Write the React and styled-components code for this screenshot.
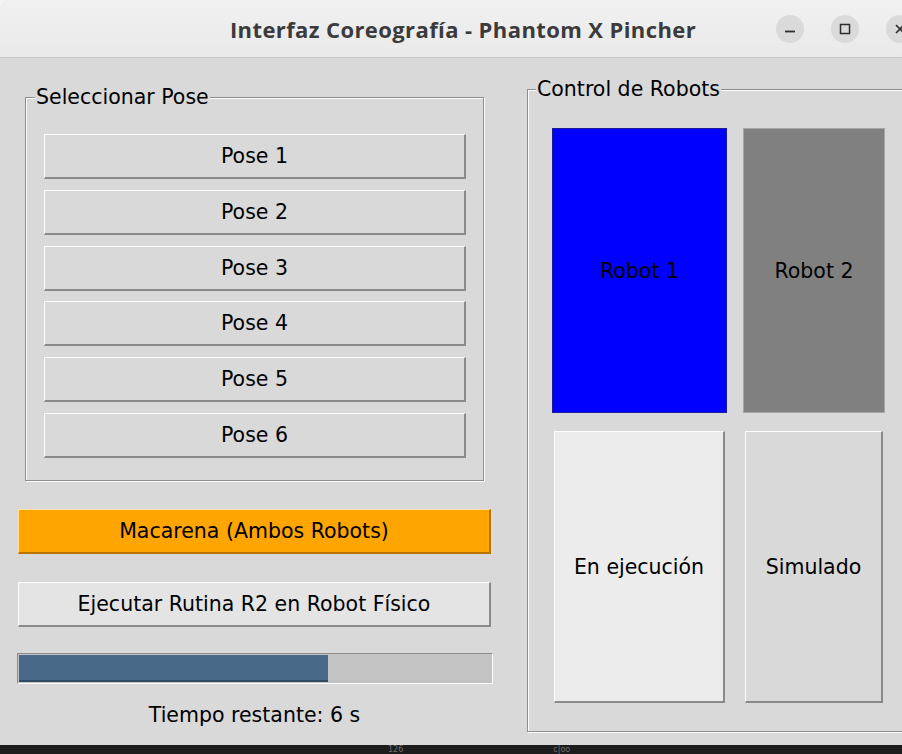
import React from 'react';
import styled, { createGlobalStyle } from 'styled-components';

const GlobalStyle = createGlobalStyle`
  html, body {
    margin: 0;
    padding: 0;
    overflow: hidden;
    background: #f4f4f4;
  }
`;

// Ventana principal
const Screen = styled.div`
  width: 902px;
  height: 754px;
  overflow: hidden;
  display: flex;
  flex-direction: column;
  font-family: "DejaVu Sans", "Liberation Sans", sans-serif;
`;

const Window = styled.div`
  width: 926px;
  height: 745px;
  flex: none;
  display: flex;
  flex-direction: column;
  background: #d9d9d9;
  border-radius: 12px 12px 0 0;
  overflow: hidden;
`;

const TitleBar = styled.div`
  height: 58px;
  flex: none;
  box-sizing: border-box;
  display: grid;
  grid-template-columns: 1fr auto 1fr;
  align-items: center;
  background: linear-gradient(#f1f1f1, #e9e9e9);
  border-bottom: 1px solid #c6c6c6;
`;

const Title = styled.div`
  grid-column: 2;
  font-family: "Open Sans", "DejaVu Sans", sans-serif;
  font-weight: 700;
  font-size: 22px;
  letter-spacing: 0.4px;
  color: #3b3b3b;
`;

const WinButtons = styled.div`
  grid-column: 3;
  justify-self: end;
  display: flex;
  gap: 27px;
  padding-right: 12px;
`;

const WinButton = styled.div`
  width: 28px;
  height: 28px;
  border-radius: 50%;
  background: #dadada;
  display: flex;
  align-items: center;
  justify-content: center;
  color: #2e2e2e;
`;

const Body = styled.div`
  flex: 1;
  display: flex;
  align-items: flex-start;
  padding: 19px 16px 0 18px;
  gap: 36px;
`;

const LeftColumn = styled.div`
  width: 473px;
  flex: none;
  display: flex;
  flex-direction: column;
  padding-top: 8px;
`;

const Frame = styled.fieldset`
  margin: 0 ${(p) => p.$inset || 0}px;
  padding: 0;
  min-width: 0;
  border: 1px solid #8e8e8e;
  box-shadow: inset 1px 1px 0 #fdfdfd, 1px 1px 0 #fdfdfd;
  ${(p) => p.$grow && 'flex: 1;'}
`;

const Legend = styled.legend`
  margin-left: ${(p) => p.$offset}px;
  padding: 0 1px;
  background: #d9d9d9;
  font-size: 20.5px;
  line-height: 24px;
  color: #000;
`;

const PoseList = styled.div`
  display: flex;
  flex-direction: column;
  gap: 10.8px;
  padding: 25px 17px 22px 18px;
`;

const TkButton = styled.button`
  height: ${(p) => p.$height || 45}px;
  box-sizing: border-box;
  margin: 0;
  padding: 0;
  font-family: "DejaVu Sans", sans-serif;
  font-size: 20.5px;
  color: #000;
  background: ${(p) => p.$bg || '#d9d9d9'};
  border-style: solid;
  border-width: 1px 2px 2px 1px;
  border-color: ${(p) => p.$light || '#fdfdfd'} ${(p) => p.$dark || '#8a8a8a'}
    ${(p) => p.$dark || '#8a8a8a'} ${(p) => p.$light || '#fdfdfd'};
  ${(p) => p.$gap && `margin-top: ${p.$gap}px;`}
`;

const Progress = styled.div`
  margin: 26px -2px 0 -1px;
  height: 31px;
  box-sizing: border-box;
  padding: 1px;
  background: #c3c3c3;
  border-style: solid;
  border-width: 1px;
  border-color: #8c8c8c #fdfdfd #fdfdfd #8c8c8c;
  display: flex;
`;

const ProgressFill = styled.div`
  height: 100%;
  box-sizing: border-box;
  background: #486a88;
  border-bottom: 2px solid #2f4a63;
`;

const TimeLabel = styled.div`
  margin-top: 19px;
  text-align: center;
  font-size: 20.5px;
  line-height: 24px;
  color: #000;
`;

const RobotGrid = styled.div`
  display: grid;
  grid-template-columns: 175px 142px;
  grid-template-rows: 285px 272px;
  column-gap: 16px;
  row-gap: 18px;
  padding: 27px 0 28px 24px;
`;

const RobotTile = styled.div`
  background: ${(p) => p.$bg};
  box-sizing: border-box;
  border: 1px solid ${(p) => p.$edge};
  display: flex;
  align-items: center;
  justify-content: center;
  font-size: 20.5px;
  color: #000;
`;

const StateButton = styled(TkButton)`
  height: auto;
  margin: 0 2px;
`;

const Taskbar = styled.div`
  flex: 1;
  background: #1c1c1c;
  display: flex;
  align-items: center;
  gap: 150px;
  padding-left: 388px;
  overflow: hidden;
  font-size: 8px;
  line-height: 8px;
  color: #6f6f6f;
`;

const poses = ['Pose 1', 'Pose 2', 'Pose 3', 'Pose 4', 'Pose 5', 'Pose 6'];
const progress = 65.4;

const App = () => {
  return (
    <Screen>
      <GlobalStyle />
      <Window>
        <TitleBar>
          <Title>Interfaz Coreografía - Phantom X Pincher</Title>
          <WinButtons>
            <WinButton>
              <svg width="12" height="12" viewBox="0 0 12 12">
                <path d="M1 8.5h10" stroke="currentColor" strokeWidth="1.8" />
              </svg>
            </WinButton>
            <WinButton>
              <svg width="12" height="12" viewBox="0 0 12 12">
                <rect x="1.5" y="1.5" width="9" height="9" fill="none" stroke="currentColor" strokeWidth="1.5" />
              </svg>
            </WinButton>
            <WinButton>
              <svg width="12" height="12" viewBox="0 0 12 12">
                <path d="M2 2l8 8M10 2l-8 8" stroke="currentColor" strokeWidth="1.6" />
              </svg>
            </WinButton>
          </WinButtons>
        </TitleBar>
        <Body>
          <LeftColumn>
            <Frame $inset={7}>
              <Legend $offset={9}>Seleccionar Pose</Legend>
              <PoseList>
                {poses.map((pose) => (
                  <TkButton key={pose}>{pose}</TkButton>
                ))}
              </PoseList>
            </Frame>
            <TkButton $gap={28} $height={45} $bg="#ffa500" $light="#ffe1a0" $dark="#b87400">
              Macarena (Ambos Robots)
            </TkButton>
            <TkButton $gap={28} $bg="#e4e4e4">Ejecutar Rutina R2 en Robot Físico</TkButton>
            <Progress>
              <ProgressFill style={{ width: `${progress}%` }} />
            </Progress>
            <TimeLabel>Tiempo restante: 6 s</TimeLabel>
          </LeftColumn>
          <Frame $grow>
            <Legend $offset={8}>Control de Robots</Legend>
            <RobotGrid>
              <RobotTile $bg="#0000ff" $edge="#1a1a9a">Robot 1</RobotTile>
              <RobotTile $bg="#808080" $edge="#a6a6a6">Robot 2</RobotTile>
              <StateButton $bg="#ececec">En ejecución</StateButton>
              <StateButton>Simulado</StateButton>
            </RobotGrid>
          </Frame>
        </Body>
      </Window>
      <Taskbar>
        <span>126</span>
        <span>c|oo</span>
      </Taskbar>
    </Screen>
  );
};

export default App;
